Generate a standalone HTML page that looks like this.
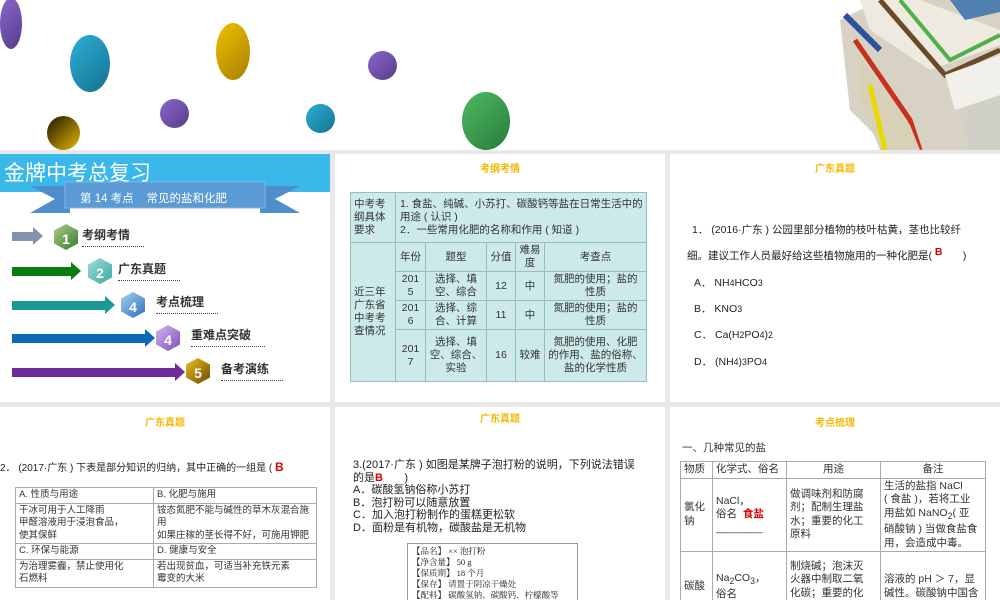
<!DOCTYPE html><html><head><meta charset="utf-8"><style>
*{margin:0;padding:0;box-sizing:border-box}
body{width:1000px;height:600px;overflow:hidden;background:#e8e8e8;font-family:"Liberation Sans","Noto Sans CJK SC",sans-serif;position:relative}
.top{position:absolute;left:0;top:0;width:1000px;height:150px;background:#fff;overflow:hidden}
.b{position:absolute;border-radius:50%}
.s{position:absolute;background:#fff;overflow:hidden}
.h{position:absolute;left:0;right:0;text-align:center;color:#f5b700;font-size:10px;font-weight:bold}
table{border-collapse:collapse;position:absolute}
td{border:1px solid #9bbcc0;font-size:10.5px;line-height:13px;color:#333;font-family:"Liberation Sans","Noto Sans CJK SC",sans-serif}
.t2 td{background:#cdeaea;text-align:center}
.t3 td{border-color:#aaa;background:#fff;font-size:9.5px;line-height:12.5px;padding:1px 3px;text-align:left}
.t4 td{border-color:#aaa;font-size:10.5px;line-height:13.5px;padding:1px 3px}
.arr{position:absolute;height:9px}
.arr:after{content:"";position:absolute;right:-9px;top:-5px;border-left:10px solid;border-left-color:inherit;border-top:9.5px solid transparent;border-bottom:9.5px solid transparent}
.cube{position:absolute;width:24px;height:26px;clip-path:polygon(50% 0,100% 25%,100% 75%,50% 100%,0 75%,0 25%);color:#fff;font-size:14px;font-weight:bold;text-align:center;line-height:30px}
.lab{position:absolute;font-size:12px;font-weight:bold;color:#333;border-bottom:1px dotted #444;padding:0 14px 3px 0}
</style></head><body>
<div class="top">
<div class="b" style="left:0;top:-2px;width:22px;height:51px;background:linear-gradient(135deg,#8a66cc,#553d8a)"></div>
<div class="b" style="left:70px;top:35px;width:40px;height:57px;background:linear-gradient(135deg,#2ab0d8,#17708f)"></div>
<div class="b" style="left:216px;top:23px;width:34px;height:57px;background:linear-gradient(135deg,#f0c000,#a88000)"></div>
<div class="b" style="left:160px;top:99px;width:29px;height:29px;background:linear-gradient(135deg,#8a66cc,#553d8a)"></div>
<div class="b" style="left:47px;top:116px;width:33px;height:34px;background:linear-gradient(135deg,#1a1200,#e8b800)"></div>
<div class="b" style="left:368px;top:51px;width:29px;height:29px;background:linear-gradient(135deg,#8a66cc,#553d8a)"></div>
<div class="b" style="left:306px;top:104px;width:29px;height:29px;background:linear-gradient(135deg,#2ab0d8,#17708f)"></div>
<div class="b" style="left:462px;top:92px;width:48px;height:58px;background:linear-gradient(135deg,#4cbb60,#2a7a3c)"></div>
<svg style="position:absolute;left:820px;top:0" width="180" height="150">
<polygon points="20,20 60,0 180,0 180,150 70,150 30,110" fill="#d8d2c4"/>
<polygon points="40,0 100,0 180,30 180,45 110,70 50,30" fill="#eeeae0"/>
<path d="M80,0 L130,60 L180,35" stroke="#4fb04a" stroke-width="4" fill="none"/>
<path d="M60,0 L125,75 L180,50" stroke="#6b4a2a" stroke-width="5" fill="none"/>
<polygon points="125,75 180,55 180,95 135,110" fill="#f2f0ea"/>
<path d="M35,40 L90,120 L100,150" stroke="#c83020" stroke-width="5" fill="none"/>
<path d="M25,15 L60,50" stroke="#3050a0" stroke-width="6" fill="none"/>
<polygon points="40,60 90,125 100,150 60,150 40,100" fill="#d9d0b8"/>
<path d="M50,85 L65,150" stroke="#e8d800" stroke-width="5" fill="none"/>
<polygon points="140,110 180,95 180,150 150,150" fill="#d0cfc8"/>
<path d="M130,0 L180,0 L180,12 L145,20 Z" fill="#5080b0"/>
</svg>
</div>

<!-- slide 1 -->
<div class="s" style="left:0;top:154px;width:330px;height:248px">
<div style="position:absolute;left:0;top:0;width:330px;height:38px;background:#3bb8ea"></div>
<div style="position:absolute;left:4px;top:3px;color:#fff;font-size:21px;">金牌中考总复习</div>
<svg style="position:absolute;left:30px;top:27px" width="270" height="50"><polygon points="0,5 40,5 40,32 0,32 25,18" fill="#4e8fcb"/><polygon points="270,5 230,5 230,32 270,32 245,18" fill="#4e8fcb"/><rect x="35" y="1" width="200" height="26" fill="#5b9bd5" stroke="#8ab4dc"/></svg>
<div style="position:absolute;left:80px;top:36px;color:#fff;font-size:11.5px">第 14 考点 &nbsp;&nbsp; 常见的盐和化肥</div>
<div class="arr" style="left:12px;top:78px;width:22px;background:#8293ad;border-color:#8293ad"></div>
<div class="cube" style="left:54px;top:70px;background:linear-gradient(135deg,#a8cc88,#3a7a30)">1</div>
<div class="lab" style="left:82px;top:72px">考纲考情</div>
<div class="arr" style="left:12px;top:113px;width:60px;background:#0b7b10;border-color:#0b7b10"></div>
<div class="cube" style="left:88px;top:104px;background:linear-gradient(135deg,#a0dcd8,#3aa8a0)">2</div>
<div class="lab" style="left:118px;top:106px">广东真题</div>
<div class="arr" style="left:12px;top:147px;width:94px;background:#1a9a90;border-color:#1a9a90"></div>
<div class="cube" style="left:121px;top:138px;background:linear-gradient(135deg,#a8d0f0,#2a70c0)">4</div>
<div class="lab" style="left:156px;top:139px">考点梳理</div>
<div class="arr" style="left:12px;top:180px;width:134px;background:#0a6ab8;border-color:#0a6ab8"></div>
<div class="cube" style="left:156px;top:171px;background:linear-gradient(135deg,#d0b8ee,#8050b8)">4</div>
<div class="lab" style="left:191px;top:172px">重难点突破</div>
<div class="arr" style="left:12px;top:214px;width:164px;background:#6e2c9a;border-color:#6e2c9a"></div>
<div class="cube" style="left:186px;top:204px;background:linear-gradient(135deg,#f0c020,#6a4a00)">5</div>
<div class="lab" style="left:221px;top:206px">备考演练</div>
</div>

<!-- slide 2 -->
<div class="s" style="left:335px;top:154px;width:330px;height:248px">
<div class="h" style="top:6px">考纲考情</div>
<table class="t2" style="left:15px;top:38px;width:297px">
<tr style="height:50px"><td style="width:45px;text-align:left;padding-left:3px">中考考<br>纲具体<br>要求</td><td colspan="5" style="text-align:left;padding-left:4px">1. 食盐、纯碱、小苏打、碳酸钙等盐在日常生活中的用途 ( 认识 )<br>2．一些常用化肥的名称和作用 ( 知道 )</td></tr>
<tr style="height:29px"><td rowspan="4" style="text-align:left;padding-left:3px">近三年<br>广东省<br>中考考<br>查情况</td><td style="width:30px">年份</td><td style="width:61px">题型</td><td style="width:29px">分值</td><td style="width:29px">难易<br>度</td><td>考查点</td></tr>
<tr style="height:29px"><td>201<br>5</td><td>选择、填<br>空、综合</td><td>12</td><td>中</td><td>氮肥的使用；盐的<br>性质</td></tr>
<tr style="height:29px"><td>201<br>6</td><td>选择、综<br>合、计算</td><td>11</td><td>中</td><td>氮肥的使用；盐的<br>性质</td></tr>
<tr style="height:52px"><td>201<br>7</td><td>选择、填<br>空、综合、<br>实验</td><td>16</td><td>较难</td><td>氮肥的使用、化肥<br>的作用、盐的俗称、<br>盐的化学性质</td></tr>
</table>
</div>

<!-- slide 3 -->
<div class="s" style="left:670px;top:154px;width:330px;height:248px;font-size:10.5px;color:#222">
<div class="h" style="top:6px">广东真题</div>
<div style="position:absolute;left:22px;top:68px">1． (2016·广东 ) 公园里部分植物的枝叶枯黄，茎也比较纤</div>
<div style="position:absolute;left:17px;top:94px">细。建议工作人员最好给这些植物施用的一种化肥是( <span style="color:#d00;font-weight:bold;position:relative;top:-4px">B</span> &nbsp;&nbsp;&nbsp;&nbsp;&nbsp;&nbsp;)</div>
<div style="position:absolute;left:24px;top:121px">A． NH<small>4</small>HCO<small>3</small></div>
<div style="position:absolute;left:24px;top:147px">B． KNO<small>3</small></div>
<div style="position:absolute;left:24px;top:173px">C． Ca(H<small>2</small>PO<small>4</small>)<small>2</small></div>
<div style="position:absolute;left:24px;top:200px">D． (NH<small>4</small>)<small>3</small>PO<small>4</small></div>
</div>

<!-- slide 4 -->
<div class="s" style="left:0;top:407px;width:330px;height:193px">
<div class="h" style="top:7px">广东真题</div>
<div style="position:absolute;left:0;top:52px;font-size:10px;color:#222;white-space:nowrap">2． (2017·广东 ) 下表是部分知识的归纳，其中正确的一组是 ( <b style="color:#d00;font-size:12px">B</b></div>
<table class="t3" style="left:15px;top:80px;width:302px">
<tr><td style="width:138px">A. 性质与用途</td><td>B. 化肥与施用</td></tr>
<tr><td>干冰可用于人工降雨<br>甲醛溶液用于浸泡食品，<br>使其保鲜</td><td>铵态氮肥不能与碱性的草木灰混合施用<br>如果庄稼的茎长得不好，可施用钾肥</td></tr>
<tr><td>C. 环保与能源</td><td>D. 健康与安全</td></tr>
<tr><td>为治理雾霾，禁止使用化<br>石燃料</td><td>若出现贫血，可适当补充铁元素<br>霉变的大米</td></tr>
</table>
</div>

<!-- slide 5 -->
<div class="s" style="left:335px;top:407px;width:330px;height:193px;font-size:11px;color:#222;line-height:12.5px">
<div class="h" style="top:7px">广东真题</div>
<div style="position:absolute;left:18px;top:52px">3.(2017·广东 ) 如图是某牌子泡打粉的说明，下列说法错误<br>的是<b style="color:#d00">B</b> &nbsp;&nbsp;&nbsp;&nbsp;&nbsp;&nbsp;)<br>A．碳酸氢钠俗称小苏打<br>B．泡打粉可以随意放置<br>C．加入泡打粉制作的蛋糕更松软<br>D．面粉是有机物，碳酸盐是无机物</div>
<div style="position:absolute;left:72px;top:136px;width:171px;height:70px;border:1px solid #999;font-size:8.5px;line-height:11px;padding:2px 4px;font-family:'Liberation Serif','Noto Serif CJK SC',serif">【品名】 ×× 泡打粉<br>【净含量】 50 g<br>【保质期】 18 个月<br>【保存】 请置于阴凉干燥处<br>【配料】 碳酸氢钠、碳酸钙、柠檬酸等</div>
</div>

<!-- slide 6 -->
<div class="s" style="left:670px;top:407px;width:330px;height:193px">
<div class="h" style="top:7px">考点梳理</div>
<div style="position:absolute;left:12px;top:33px;font-size:10.5px;color:#333">一、几种常见的盐</div>
<table class="t4" style="left:10px;top:54px;width:306px">
<tr><td style="width:32px">物质</td><td style="width:74px">化学式、俗名</td><td style="width:94px;text-align:center">用途</td><td style="text-align:center">备注</td></tr>
<tr style="height:72px"><td>氯化<br>钠</td><td>NaCl，<br>俗名 &nbsp;<b style="color:#d00">食盐</b><br>________</td><td>做调味剂和防腐<br>剂；配制生理盐<br>水；重要的化工<br>原料</td><td>生活的盐指 NaCl<br>( 食盐 )，若将工业<br>用盐如 NaNO<sub>2</sub>( 亚<br>硝酸钠 ) 当做食盐食<br>用，会造成中毒。</td></tr>
<tr style="height:70px"><td>碳酸</td><td>Na<sub>2</sub>CO<sub>3</sub>，<br>俗名</td><td>制烧碱；泡沫灭<br>火器中制取二氧<br>化碳；重要的化<br>工产品，广泛应</td><td>溶液的 pH ＞ 7，显<br>碱性。碳酸钠中国含</td></tr>
</table>
</div>
</body></html>
